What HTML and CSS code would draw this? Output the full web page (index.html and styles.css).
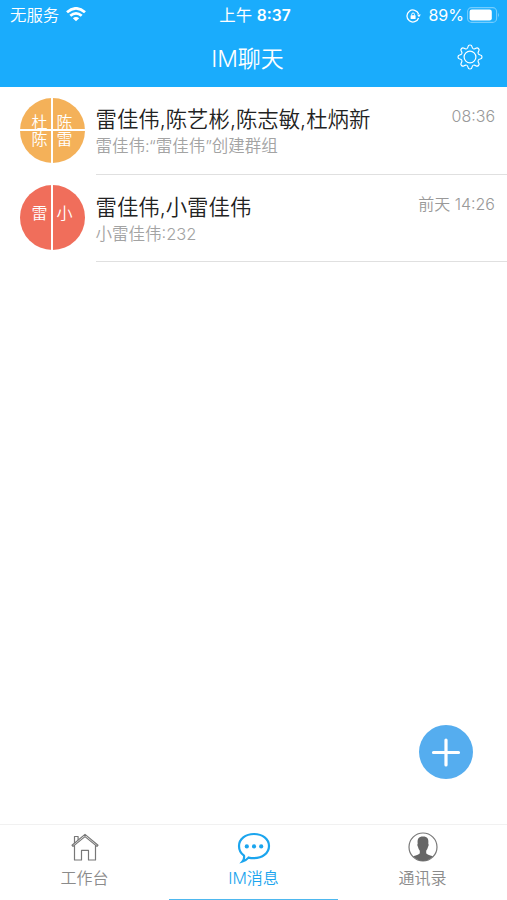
FILE: index.html
```html
<!DOCTYPE html>
<html lang="zh-CN">
<head>
<meta charset="utf-8">
<title>IM聊天</title>
<link rel="stylesheet" href="styles.css">
</head>
<body>
<div class="app">
  <header class="header">
    <div class="status">
      <div class="status-left">
        <span>无服务</span>
        <svg class="wifi" width="20" height="15" viewBox="0 0 20 15" fill="none" stroke="#fff" stroke-width="2.8">
          <path d="M1 5.3Q10-2.5 19 5.3"/>
          <path d="M4.3 8.8Q10 3.9 15.7 8.8"/>
          <path d="M10 14.3L6.8 11.3Q10 8.6 13.2 11.3Z" fill="#fff" stroke="none"/>
        </svg>
      </div>
      <div class="status-time">上午 <b>8:37</b></div>
      <div class="status-right">
        <svg width="15" height="14" viewBox="0 0 15 14" fill="none" stroke="#fff" stroke-width="1.3">
          <path d="M12.6 5A6 6 0 1 0 12.6 9"/>
          <path d="M11 5.6h3.8l-1.8 2.6z" fill="#fff" stroke="none"/>
          <rect x="4.6" y="6.3" width="5" height="3.8" rx=".5" fill="#fff" stroke="none"/>
          <path d="M5.7 6.5V5.4a1.4 1.4 0 0 1 2.8 0v1.1" stroke-width="1"/>
        </svg>
        <span class="percent">89%</span>
        <svg class="battery" width="33" height="16" viewBox="0 0 33 16">
          <rect x=".6" y=".6" width="29" height="14.8" rx="4" fill="none" stroke="#fff" stroke-opacity=".4" stroke-width="1.1"/>
          <rect x="2.6" y="2.6" width="22.2" height="10.8" rx="2.2" fill="#fff"/>
          <path d="M31 5.5q1.7 2.5 0 5z" fill="#fff" fill-opacity=".5"/>
        </svg>
      </div>
    </div>
    <div class="navbar">
      <h1>IM聊天</h1>
      <svg class="gear" width="28" height="28" viewBox="-14 -14 28 28" fill="none" stroke="#fff" stroke-width="1.2">
        <defs><path id="tooth" d="M-3.4-8.2Q-2.2-8.7-2-10.3Q-1.8-12 0-12Q1.8-12 2-10.3Q2.2-8.7 3.4-8.2"/></defs>
        <use href="#tooth"/><use href="#tooth" transform="rotate(45)"/>
        <use href="#tooth" transform="rotate(90)"/><use href="#tooth" transform="rotate(135)"/>
        <use href="#tooth" transform="rotate(180)"/><use href="#tooth" transform="rotate(225)"/>
        <use href="#tooth" transform="rotate(270)"/><use href="#tooth" transform="rotate(315)"/>
        <circle r="5.9"/>
      </svg>
    </div>
  </header>

  <main class="chats">
    <div class="chat">
      <div class="avatar avatar-four"><span>杜</span><span>陈</span><span>陈</span><span>雷</span></div>
      <div class="chat-body">
        <div class="chat-text">
          <div class="name">雷佳伟,陈艺彬,陈志敏,杜炳新</div>
          <div class="preview">雷佳伟:“雷佳伟”创建群组</div>
        </div>
        <time>08:36</time>
      </div>
    </div>
    <div class="chat">
      <div class="avatar avatar-two"><span>雷</span><span>小</span></div>
      <div class="chat-body">
        <div class="chat-text">
          <div class="name">雷佳伟,小雷佳伟</div>
          <div class="preview">小雷佳伟:232</div>
        </div>
        <time>前天 14:26</time>
      </div>
    </div>
  </main>

  <div class="add">
    <svg width="54" height="54" viewBox="0 0 54 54" stroke="#fff" stroke-width="3.2" stroke-linecap="round"><path d="M27 15v25M14.500 27.500h25"/></svg>
  </div>

  <nav class="tabs">
    <div class="tab">
      <svg width="34" height="34" viewBox="0 0 34 34" fill="none" stroke="#777" stroke-width="1.200" stroke-linejoin="round">
        <path d="M4 15.200L17 4.400l13 10.800-1 1.200L17 6.600 5 16.400zM6.500 15.300V30h7v-9.600h7V30h7V15.300"/>
        <path d="M6.500 13V6.500h3.600V10"/>
      </svg>
      <span>工作台</span>
    </div>
    <div class="tab active">
      <svg width="34" height="34" viewBox="0 0 34 34">
        <path d="M17 4C25.500 4 32 9 32 16S25.500 28.200 17 28.200Q14 28.200 11.500 27.600Q9 30.500 5.500 31.500Q7.600 29 7 25.700Q2 22 2 16C2 9 8.500 4 17 4Z" fill="none" stroke="#1ba5ee" stroke-width="2.200"/>
        <g fill="#1ba5ee"><circle cx="9.800" cy="16.400" r="2.100"/><circle cx="17" cy="16.400" r="2.100"/><circle cx="24.200" cy="16.400" r="2.100"/></g>
      </svg>
      <span>IM消息</span>
    </div>
    <div class="tab">
      <svg width="34" height="34" viewBox="0 0 34 34">
        <circle cx="17" cy="17" r="14" fill="none" stroke="#777" stroke-width="1.200"/>
        <path d="M17 6.500C21.500 6.500 22.800 9 22.300 13.500Q23.300 14.500 22 17Q21.400 19.500 20.200 20.700V23.200Q21 24.700 27 26.200Q22.500 31 17 31T7 26.200Q13 24.700 13.800 23.200V20.700Q12.600 19.500 12 17Q10.700 14.500 11.700 13.500C11.200 9 12.500 6.500 17 6.500Z" fill="#666"/>
      </svg>
      <span>通讯录</span>
    </div>
  </nav>
</div>
</body>
</html>
```
FILE: styles.css
```css
* { box-sizing: border-box; }
body {
  margin: 0;
  background: #fff;
  font-family: Inter, "Noto Sans CJK SC", sans-serif;
}
.app {
  position: relative;
  display: flex;
  flex-direction: column;
  width: 507px;
  height: 900px;
  overflow: hidden;
}
.header {
  height: 87px;
  background: #1aacfc;
  color: #fff;
}
.status {
  display: grid;
  grid-template-columns: 1fr auto 1fr;
  align-items: center;
  height: 29px;
  padding: 1px 7px 0 10px;
  font-size: 16.4px;
  font-weight: 350;
  line-height: 29px;
}
.status-left, .status-right {
  display: flex;
  align-items: center;
}
.status-left { gap: 7px; }
.wifi { margin-top: -2px; }
.status-right { justify-content: flex-end; }
.battery { margin-top: -2px; }
.percent { margin: 0 3px 0 7px; font-size: 16px; font-weight: 400; }
.status-time { font-weight: 400; white-space: nowrap; }
.status-time b { font-size: 15.6px; font-weight: 600; }
.navbar {
  display: grid;
  grid-template-columns: 1fr auto 1fr;
  align-items: center;
  height: 56px;
  padding: 0 23px 0 11px;
}
.navbar h1 {
  grid-column: 2;
  margin: 0;
  font-size: 23px;
  font-weight: 350;
}
.gear { justify-self: end; }
.chats { flex: 1; }
.chat {
  display: flex;
  gap: 11px;
  height: 87.5px;
  padding-left: 19.5px;
}
.avatar {
  display: grid;
  grid-template-columns: 16px 16px;
  justify-content: center;
  align-content: start;
  column-gap: 9px;
  width: 65px;
  height: 65px;
  margin-top: 10.5px;
  padding-top: 16px;
  border-radius: 50%;
  color: #fff;
  font-size: 16px;
  font-weight: 350;
  line-height: 17px;
  text-align: center;
}
.avatar-four {
  background:
    linear-gradient(#fff, #fff) center / 2px 100% no-repeat,
    linear-gradient(#fff, #fff) center / 100% 2px no-repeat,
    #f4b159;
}
.avatar-two {
  padding-top: 20px;
  background: linear-gradient(#fff, #fff) center / 2px 100% no-repeat, #f06e5b;
}
.chat-body {
  flex: 1;
  display: flex;
  justify-content: space-between;
  padding: 17px 12px 0 0;
  border-bottom: 1.5px solid #e0e0e0;
}
.name {
  color: #222;
  font-size: 21.4px;
  font-weight: 350;
  line-height: 30px;
}
.preview {
  color: #a3a3a3;
  font-size: 16.5px;
  font-weight: 350;
  line-height: 25px;
}
time {
  color: #999;
  font-size: 16px;
  font-weight: 350;
  line-height: 25px;
}
.add {
  position: absolute;
  left: 419px;
  top: 725px;
  width: 54px;
  height: 54px;
  border-radius: 50%;
  background: #55adef;
}
.add svg { display: block; }
.tabs {
  display: flex;
  height: 76px;
  border-top: 1px solid #f1f1f1;
}
.tab {
  flex: 1;
  display: flex;
  flex-direction: column;
  align-items: center;
  padding-top: 5px;
  color: #8b8b8b;
  font-size: 16px;
  font-weight: 350;
  line-height: 28px;
}
.tab.active {
  color: #1ba5ee;
  border-bottom: 1px solid #4eb8ef;
}
```
